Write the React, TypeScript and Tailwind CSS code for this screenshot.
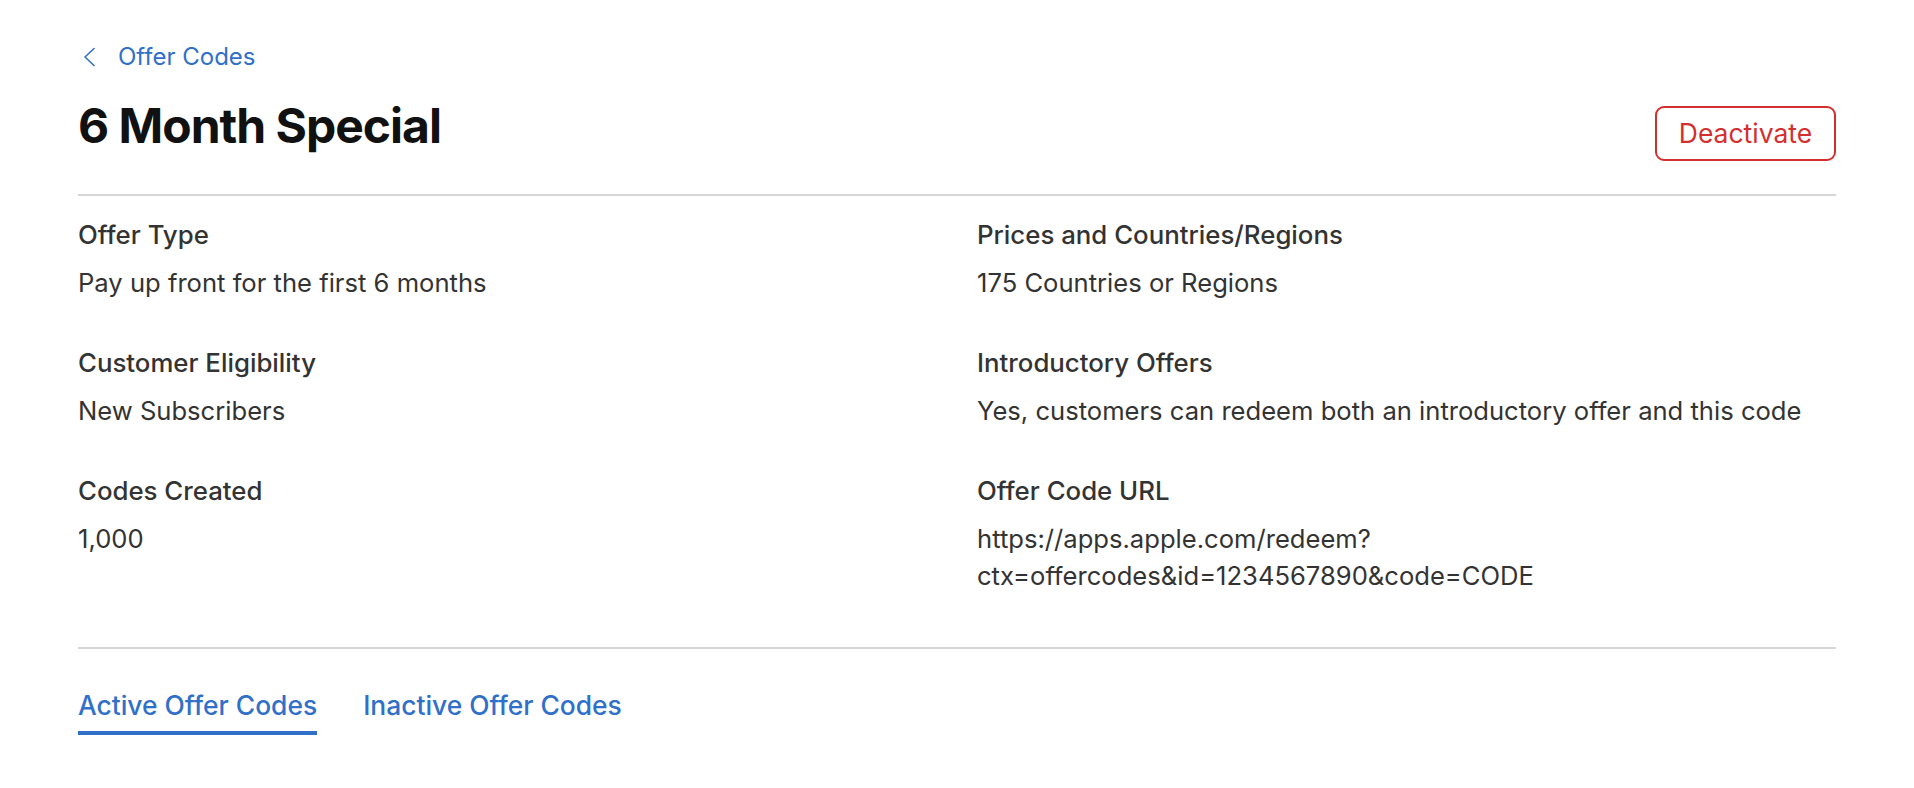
const details = [
  { label: "Offer Type", value: ["Pay up front for the first 6 months"] },
  { label: "Prices and Countries/Regions", value: ["175 Countries or Regions"] },
  { label: "Customer Eligibility", value: ["New Subscribers"] },
  {
    label: "Introductory Offers",
    value: ["Yes, customers can redeem both an introductory offer and this code"],
  },
  { label: "Codes Created", value: ["1,000"] },
  {
    label: "Offer Code URL",
    value: ["https://apps.apple.com/redeem?", "ctx=offercodes&id=1234567890&code=CODE"],
  },
];

function DetailItem({ label, value }: { label: string; value: string[] }) {
  return (
    <div>
      <div className="text-[25.8px] leading-[32px] font-medium text-[#333333]">{label}</div>
      <div className="mt-[13px] text-[25.6px] leading-[37px] text-[#333333]">
        {value.map((line) => (
          <div key={line}>{line}</div>
        ))}
      </div>
    </div>
  );
}

export default function App() {
  return (
    <div
      className="min-h-screen bg-white px-[78px] pt-[42px]"
      style={{ fontFamily: "Inter, 'Liberation Sans', sans-serif" }}
    >
      <a href="#" className="flex items-center text-[24px] leading-[30px] text-[#3070c8]">
        <svg className="ml-[4px] h-[20px] w-[14px]" viewBox="0 0 14 20" fill="none">
          <path d="M12 1.5 3 10l9 8.5" stroke="currentColor" strokeWidth="1.6" strokeLinecap="round" strokeLinejoin="round" />
        </svg>
        <span className="ml-[22px]">Offer Codes</span>
      </a>

      <div className="mt-[24px] flex items-start justify-between">
        <h1 className="text-[48px] leading-[60px] font-bold tracking-[-1px] text-[#111111]">6 Month Special</h1>
        <button className="mt-[10px] h-[55px] w-[181px] rounded-[9px] border-2 border-[#d32f2f] text-[26.5px] text-[#d32f2f]">
          Deactivate
        </button>
      </div>

      <div className="mt-[33px] h-[2px] bg-[#d6d6d6]" />

      <div className="grid grid-cols-2 gap-x-[40px] gap-y-[46px] pt-[23px]">
        {details.map((d) => (
          <DetailItem key={d.label} label={d.label} value={d.value} />
        ))}
      </div>

      <div className="mt-[53px] h-[2px] bg-[#d6d6d6]" />

      <div className="flex gap-[46px] pt-[40px]">
        <button className="border-b-4 border-[#3070c8] pb-[10px] text-[26.4px] leading-[32px] font-medium text-[#3070c8]">
          Active Offer Codes
        </button>
        <button className="border-b-4 border-transparent pb-[10px] text-[26.4px] leading-[32px] font-medium text-[#3070c8]">
          Inactive Offer Codes
        </button>
      </div>
    </div>
  );
}
